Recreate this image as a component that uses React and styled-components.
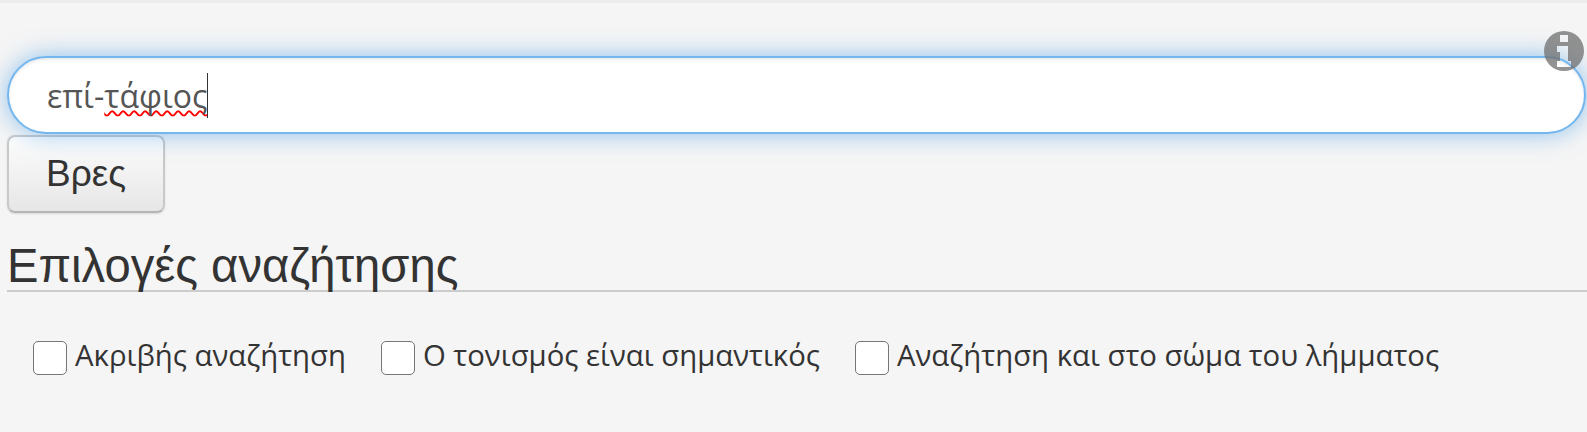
import React from "react";
import styled, { createGlobalStyle } from "styled-components";

const OPTIONS = [
  "Ακριβής αναζήτηση",
  "Ο τονισμός είναι σημαντικός",
  "Αναζήτηση και στο σώμα του λήμματος",
];

function InfoIcon() {
  return (
    <InfoBadge viewBox="0 0 40 40" aria-hidden="true">
      <path
        fillRule="evenodd"
        fill="#6f6f6f"
        d="M20 0a20 20 0 1 0 0 40a20 20 0 1 0 0-40ZM16 4h8v7h-8ZM13 15h11v15h3v6H13v-6h3v-9h-3Z"
      />
    </InfoBadge>
  );
}

export default function App() {
  return (
    <Page>
      <GlobalStyle />
      <SearchArea>
        <SearchBox role="textbox">
          επί-<Misspelled>τάφιος</Misspelled>
          <Caret />
        </SearchBox>
        <InfoIcon />
      </SearchArea>
      <FindButton type="button">Βρες</FindButton>
      <Heading>Επιλογές αναζήτησης</Heading>
      <OptionRow>
        {OPTIONS.map((label) => (
          <Option key={label}>
            <CheckBox />
            <OptionText>{label}</OptionText>
          </Option>
        ))}
      </OptionRow>
    </Page>
  );
}

const GlobalStyle = createGlobalStyle`
  html, body {
    margin: 0;
    background: #f5f5f5;
  }
  * {
    box-sizing: border-box;
  }
`;

const Page = styled.div`
  height: 432px;
  padding: 53px 1px 0 7px;
  overflow: hidden;
  border-top: 3px solid #ececec;
  font-family: "Open Sans", sans-serif;
  color: #333;
`;

const SearchArea = styled.div`
  position: relative;
`;

const SearchBox = styled.div`
  display: flex;
  align-items: center;
  height: 78px;
  padding-left: 38px;
  border: 2px solid #74b6ee;
  border-radius: 39px;
  background: #fff;
  box-shadow: 0 0 24px rgba(56, 150, 230, 0.55), inset 0 2px 3px rgba(0, 0, 0, 0.08);
  color: #555;
  font-size: 32px;
  white-space: pre;
`;

const Misspelled = styled.span`
  text-decoration: underline wavy #f00 2px;
  text-decoration-skip-ink: none;
  text-underline-offset: 2px;
`;

const Caret = styled.span`
  width: 1px;
  height: 45px;
  background: #333;
`;

const InfoBadge = styled.svg`
  position: absolute;
  top: -25px;
  right: 2px;
  width: 40px;
  height: 40px;
  opacity: 0.75;
`;

const FindButton = styled.button`
  display: block;
  width: 158px;
  height: 78px;
  margin-top: 1px;
  padding: 0;
  border: 2px solid #c9c9c9;
  border-bottom-color: #b5b5b5;
  border-radius: 8px;
  background: linear-gradient(#fdfdfd, #e6e6e6);
  box-shadow: 0 1px 2px rgba(0, 0, 0, 0.12);
  color: #333;
  font-family: "Liberation Sans", Arial, sans-serif;
  font-size: 37px;
`;

const Heading = styled.h2`
  height: 79px;
  margin: 0 -1px 0 0;
  padding-top: 23px;
  border-bottom: 2px solid #ccc;
  font-family: "Liberation Sans", Arial, sans-serif;
  font-size: 47.2px;
  font-weight: 400;
  line-height: 60px;
  white-space: nowrap;
`;

const OptionRow = styled.div`
  display: flex;
  gap: 35px;
  margin-top: 48px;
  padding-left: 26px;
`;

const Option = styled.label`
  display: flex;
  align-items: center;
  gap: 8px;
  height: 36px;
  color: #333;
`;

const OptionText = styled.span`
  margin-bottom: 6px;
  font-size: 29.3px;
`;

const CheckBox = styled.span`
  width: 34px;
  height: 34px;
  border: 1px solid #767676;
  border-radius: 5px;
  background: #fff;
`;
